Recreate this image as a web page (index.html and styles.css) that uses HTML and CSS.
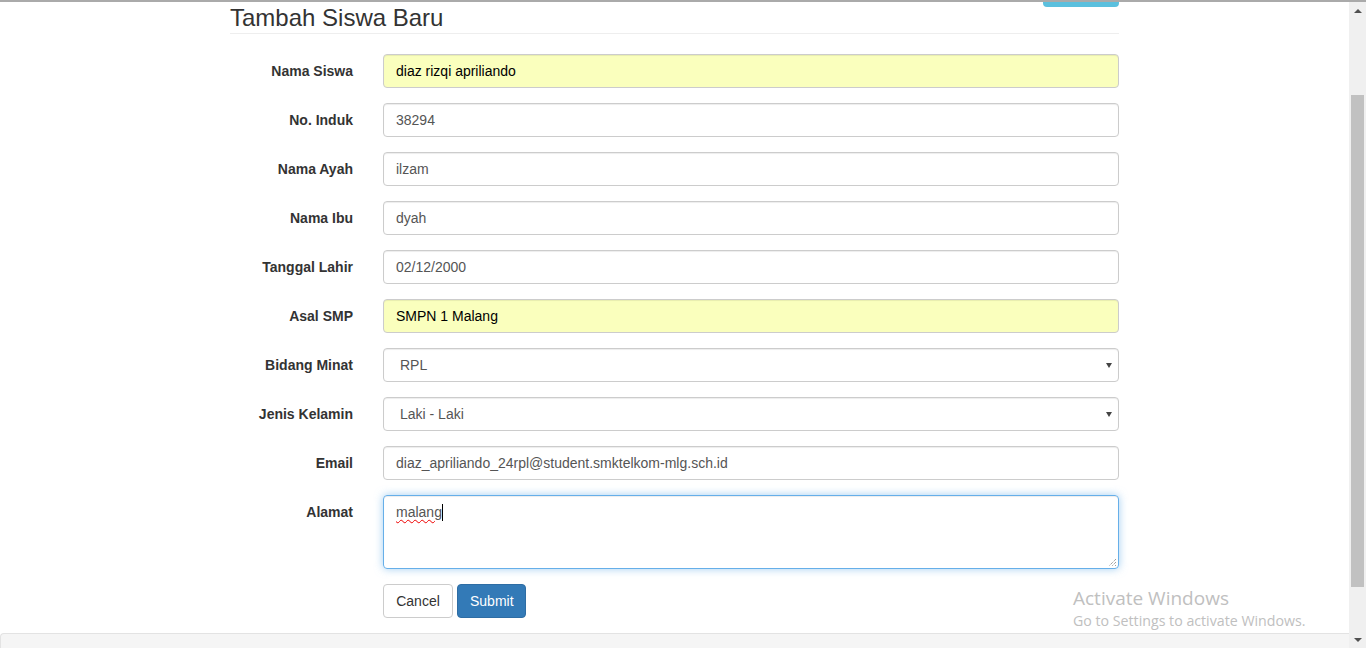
FILE: index.html
```html
<!DOCTYPE html>
<html lang="id">
<head>
<meta charset="utf-8">
<title>Tambah Siswa Baru</title>
<link rel="stylesheet" href="styles.css">
</head>
<body>
<div class="topline"></div>
<div class="viewport">
  <main class="page">
    <div class="content">
      <div class="toprow"><span class="btn-stub"></span></div>
      <h3 class="title">Tambah Siswa Baru</h3>
      <form class="form">
        <div class="group">
          <label class="label">Nama Siswa</label>
          <div class="control"><input class="input autofill" type="text" value="diaz rizqi apriliando"></div>
        </div>
        <div class="group">
          <label class="label">No. Induk</label>
          <div class="control"><input class="input" type="text" value="38294"></div>
        </div>
        <div class="group">
          <label class="label">Nama Ayah</label>
          <div class="control"><input class="input" type="text" value="ilzam"></div>
        </div>
        <div class="group">
          <label class="label">Nama Ibu</label>
          <div class="control"><input class="input" type="text" value="dyah"></div>
        </div>
        <div class="group">
          <label class="label">Tanggal Lahir</label>
          <div class="control"><input class="input" type="text" value="02/12/2000"></div>
        </div>
        <div class="group">
          <label class="label">Asal SMP</label>
          <div class="control"><input class="input autofill" type="text" value="SMPN 1 Malang"></div>
        </div>
        <div class="group">
          <label class="label">Bidang Minat</label>
          <div class="control select-wrap">
            <select class="input select"><option>RPL</option></select>
          </div>
        </div>
        <div class="group">
          <label class="label">Jenis Kelamin</label>
          <div class="control select-wrap">
            <select class="input select"><option>Laki - Laki</option></select>
          </div>
        </div>
        <div class="group">
          <label class="label">Email</label>
          <div class="control"><input class="input" type="text" value="diaz_apriliando_24rpl@student.smktelkom-mlg.sch.id"></div>
        </div>
        <div class="group">
          <label class="label">Alamat</label>
          <div class="control">
            <div class="textarea"><span class="spell">malang</span><span class="caret"></span>
              <svg class="grip" width="9" height="9" viewBox="0 0 9 9"><path d="M8 1L1 8M8 4L4 8M8 7L7 8" stroke="#777" stroke-width="1" stroke-dasharray="1 1"/></svg>
            </div>
          </div>
        </div>
        <div class="actions">
          <button type="button" class="btn btn-default">Cancel</button>
          <button type="button" class="btn btn-primary">Submit</button>
        </div>
      </form>
    </div>
    <div class="footer-bar"></div>
  </main>
  <div class="scrollbar">
    <div class="sb-btn"><span class="arrow-up"></span></div>
    <div class="sb-track"><div class="sb-thumb"></div></div>
    <div class="sb-btn"><span class="arrow-down"></span></div>
  </div>
</div>
<div class="watermark">
  <div class="wm-title">Activate Windows</div>
  <div class="wm-sub">Go to Settings to activate Windows.</div>
</div>
</body>
</html>
```
FILE: styles.css
```css
html, body {
  margin: 0;
  padding: 0;
  height: 648px;
  overflow: hidden;
  background: #fff;
  font-family: "Liberation Sans", Arial, Helvetica, sans-serif;
  font-size: 14px;
  color: #333;
}

.topline {
  height: 2px;
  background: #aaa;
}

.viewport {
  display: flex;
  height: 646px;
}

.page {
  flex: 1;
  display: flex;
  flex-direction: column;
  overflow: hidden;
}

.content {
  margin-left: 230px;
  width: 889px;
}

.toprow {
  display: flex;
  justify-content: flex-end;
  height: 5px;
}

.btn-stub {
  width: 76px;
  height: 5px;
  background: #5bc0de;
  border-radius: 0 0 4px 4px;
}

.title {
  margin: 0;
  font-size: 24px;
  font-weight: 400;
  line-height: 22px;
  padding-bottom: 4px;
  border-bottom: 1px solid #eee;
  color: #333;
}

.form {
  margin: 20px 0 0;
}

.group {
  display: flex;
  margin-bottom: 15px;
}

.label {
  width: 123px;
  margin-right: 30px;
  text-align: right;
  font-weight: 700;
  line-height: 20px;
  padding-top: 7px;
  box-sizing: border-box;
  color: #333;
}

.control {
  width: 736px;
  position: relative;
}

.input {
  display: block;
  width: 100%;
  height: 34px;
  box-sizing: border-box;
  padding: 6px 12px;
  font-family: "Liberation Sans", Arial, Helvetica, sans-serif;
  font-size: 14px;
  line-height: 20px;
  color: #555;
  background: #fff;
  border: 1px solid #ccc;
  border-radius: 4px;
  box-shadow: inset 0 1px 1px rgba(0, 0, 0, .075);
  outline: none;
  margin: 0;
}

.autofill {
  background: #faffbd;
  color: #000;
}

.select {
  -webkit-appearance: none;
  appearance: none;
  padding-left: 16px;
}

.select-wrap::after {
  content: "";
  position: absolute;
  right: 7px;
  top: 15px;
  border-left: 3.5px solid transparent;
  border-right: 3.5px solid transparent;
  border-top: 5px solid #444;
}

.textarea {
  position: relative;
  height: 74px;
  box-sizing: border-box;
  padding: 6px 12px;
  line-height: 20px;
  color: #555;
  border: 1px solid #66afe9;
  border-radius: 4px;
  box-shadow: inset 0 1px 1px rgba(0, 0, 0, .075), 0 0 8px rgba(102, 175, 233, .6);
}

.spell {
  text-decoration: underline wavy #e00;
  text-decoration-thickness: 1px;
  text-underline-offset: 2px;
}

.caret {
  display: inline-block;
  width: 1px;
  height: 17px;
  background: #000;
  vertical-align: -4px;
}

.grip {
  position: absolute;
  right: 1px;
  bottom: 1px;
}

.actions {
  display: flex;
  gap: 4px;
  padding-left: 153px;
}

.btn {
  height: 34px;
  box-sizing: border-box;
  padding: 6px 12px;
  font-family: "Liberation Sans", Arial, Helvetica, sans-serif;
  font-size: 14px;
  line-height: 20px;
  border: 1px solid #ccc;
  border-radius: 4px;
  margin: 0;
  cursor: pointer;
}

.btn-default {
  background: #fff;
  color: #333;
  width: 70px;
}

.btn-primary {
  background: #337ab7;
  border-color: #2e6da4;
  color: #fff;
  width: 69px;
}

.footer-bar {
  margin-top: 15px;
  height: 30px;
  flex-shrink: 0;
  background: #f5f5f5;
  border: 1px solid #e3e3e3;
  border-radius: 4px 0 0 0;
  border-right: none;
}

.scrollbar {
  width: 17px;
  flex-shrink: 0;
  background: #f0f0f0;
  display: flex;
  flex-direction: column;
}

.sb-btn {
  height: 17px;
  display: flex;
  align-items: center;
  justify-content: center;
}

.arrow-up {
  width: 0;
  height: 0;
  border-left: 4px solid transparent;
  border-right: 4px solid transparent;
  border-bottom: 4px solid #505050;
}

.arrow-down {
  width: 0;
  height: 0;
  border-left: 4px solid transparent;
  border-right: 4px solid transparent;
  border-top: 4px solid #505050;
}

.sb-track {
  flex: 1;
}

.sb-thumb {
  margin: 76px 2px 0;
  height: 492px;
  background: #c1c1c1;
}

.watermark {
  position: absolute;
  left: 1073px;
  top: 585px;
  font-family: "Open Sans", "Noto Sans", sans-serif;
  color: #c0c0c0;
  pointer-events: none;
}

.wm-title {
  font-size: 19px;
  line-height: 26px;
}

.wm-sub {
  font-size: 14.2px;
  line-height: 19px;
}
```
